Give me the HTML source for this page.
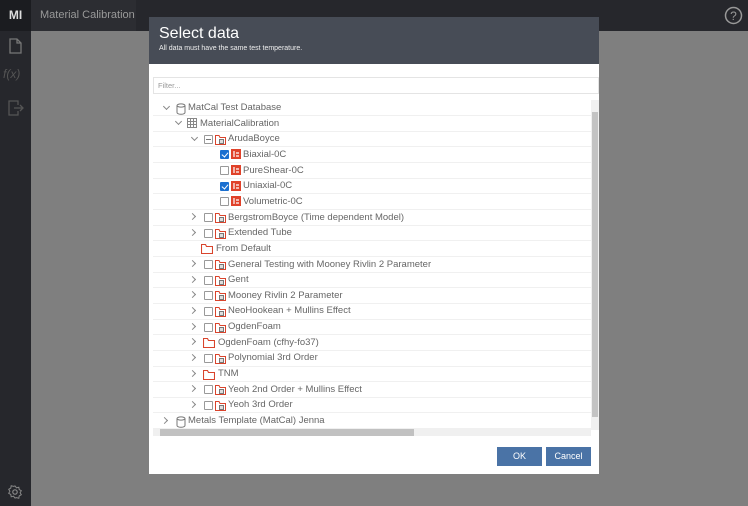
<!DOCTYPE html>
<html><head><meta charset="utf-8"><style>
*{margin:0;padding:0;box-sizing:border-box}
body{width:748px;height:506px;overflow:hidden;background:#7f7f7f;font-family:"Liberation Sans",sans-serif;position:relative}
.top{position:absolute;left:0;top:0;width:748px;height:31px;background:#26272c}
.side{position:absolute;left:0;top:0;width:31px;height:506px;background:#26272c}
.mi{position:absolute;left:0;top:0;width:31px;height:31px;background:#1b1c20;color:#ddd;font-weight:bold;font-size:12px;line-height:31px;text-align:center}
.title{position:absolute;left:31px;top:0;width:105px;height:31px;background:#2c2d32;color:#999;font-size:11px;line-height:31px;padding-left:9px}
.dlg{position:absolute;left:149px;top:17px;width:450px;height:457px;background:#fff}
.hd{height:47px;background:#474c56;color:#fff;padding:8px 0 0 10px}
.hd h1{font-size:16px;font-weight:normal;line-height:18px}
.hd p{font-size:7px;margin-top:2px;color:#eee}
.filter{position:absolute;left:4px;top:60px;width:446px;height:17px;border:1px solid #e4e4e4;font-size:7.5px;color:#999;line-height:15px;padding-left:4px}
.row{position:absolute;left:4px;width:438px;height:15.65px;border-bottom:1px solid #f0f0f0}
.t{position:absolute;font-size:9.5px;color:#666;top:1.5px;white-space:nowrap}
.ch{position:absolute;top:3px;width:5px;height:5px;border-right:1px solid #888;border-bottom:1px solid #888}
.cd{transform:rotate(45deg)}
.cr{transform:rotate(-45deg);top:4px}
.cb{position:absolute;top:3px;width:9px;height:9px;border:1px solid #999;border-radius:1px;background:#fff}
.cb.on{background:#1a6fd0;border-color:#1a6fd0}
.cb.on:after{content:"";position:absolute;left:2px;top:0px;width:3px;height:5px;border-right:1.5px solid #fff;border-bottom:1.5px solid #fff;transform:rotate(40deg)}
.ic{position:absolute;top:2px}
.vs{position:absolute;left:442px;top:83px;width:8px;height:330px;background:#f0f0f0}
.vt{position:absolute;left:443px;top:95px;width:6px;height:305px;background:#c3c3c3}
.hs{position:absolute;left:4px;top:412px;width:438px;height:7px;background:#f0f0f0}
.ht{position:absolute;left:11px;top:412px;width:254px;height:7px;background:#c1c1c1}
.btn{position:absolute;top:430px;height:19px;background:#4a73a6;color:#fff;font-size:9px;line-height:19px;text-align:center}
</style></head><body>
<div class="top"></div><div class="side"></div>
<div class="mi">MI</div><div class="title">Material Calibration</div>
<svg style="position:absolute;left:9px;top:38px" width="13" height="16"><path d="M1 1h7l4 4v10H1z M8 1v4h4" fill="none" stroke="#777" stroke-width="1.3"/></svg>
<div style="position:absolute;left:3px;top:67px;color:#555;font-size:12px;font-style:italic">f(x)</div>
<svg style="position:absolute;left:8px;top:100px" width="16" height="16"><path d="M10 5V1H1v14h9v-4 M6 8h9 M12 5l3 3-3 3" fill="none" stroke="#555" stroke-width="1.3"/></svg>
<svg style="position:absolute;left:8px;top:485px" width="14" height="14"><circle cx="7" cy="7" r="2.2" fill="none" stroke="#888" stroke-width="1.2"/><path d="M7 1l1.5 1.8 2.3-.6.4 2.3 2.1 1.2-1.2 2 1.2 2-2.1 1.2-.4 2.3-2.3-.6L7 13l-1.5-1.8-2.3.6-.4-2.3L.7 8.3l1.2-2-1.2-2 2.1-1.2.4-2.3 2.3.6z" fill="none" stroke="#888" stroke-width="1"/></svg>
<svg style="position:absolute;left:724px;top:6px" width="19" height="19"><circle cx="9.5" cy="9.5" r="8" fill="none" stroke="#999" stroke-width="1.5"/><text x="9.5" y="14" font-size="12" fill="#999" text-anchor="middle" font-family="Liberation Sans">?</text></svg>

<div class="dlg">
<div class="hd"><h1>Select data</h1><p>All data must have the same test temperature.</p></div>
<div class="filter">Filter...</div>
<svg width="0" height="0" style="position:absolute"><defs>
<g id="db"><path d="M1 2.5v7c0 1 2 1.8 4 1.8s4-.8 4-1.8v-7" fill="none" stroke="#777"/><ellipse cx="5" cy="2.5" rx="4" ry="1.6" fill="none" stroke="#777"/></g>
<g id="tb"><rect x=".5" y=".5" width="9" height="9" fill="none" stroke="#888"/><path d="M.5 3.5h9M.5 6.5h9M3.5 .5v9M6.5 .5v9" stroke="#888"/></g>
<g id="fr"><path d="M.5 2.5v8h10v-7H5L4 1.5H.5z" fill="none" stroke="#d9442c"/><rect x="4" y="5" width="5" height="5" fill="#777"/><rect x="5" y="6" width="3" height="3" fill="#ddd"/></g>
<g id="fo"><path d="M.5 2.5v8h11v-7H5.5L4.5 1.5H.5z" fill="none" stroke="#d9442c" stroke-width="1.1"/></g>
<g id="da"><rect x="0" y="0" width="10" height="10" fill="#e0422a"/><path d="M3 2v6M5 4h3M5 7h3" stroke="#fff" stroke-width="1.2"/></g>
</defs></svg>
<div class="row" style="top:83.5px"><div class="ch cd" style="left:11px"></div><svg class="ic" style="left:23px" width="11" height="12"><use href="#db"/></svg><div class="t" style="left:35px">MatCal Test Database</div></div>
<div class="row" style="top:99.15px"><div class="ch cd" style="left:23px"></div><svg class="ic" style="left:34px" width="11" height="11"><use href="#tb"/></svg><div class="t" style="left:47px">MaterialCalibration</div></div>
<div class="row" style="top:114.8px"><div class="ch cd" style="left:39px"></div><div class="cb" style="left:51px"><div style="position:absolute;left:1px;top:3px;width:5px;height:1px;background:#777"></div></div><svg class="ic" style="left:62px" width="12" height="12"><use href="#fr"/></svg><div class="t" style="left:75px">ArudaBoyce</div></div>
<div class="row" style="top:130.45px"><div class="cb on" style="left:67px"></div><svg class="ic" style="left:78px" width="10" height="10"><use href="#da"/></svg><div class="t" style="left:90px">Biaxial-0C</div></div>
<div class="row" style="top:146.1px"><div class="cb" style="left:67px"></div><svg class="ic" style="left:78px" width="10" height="10"><use href="#da"/></svg><div class="t" style="left:90px">PureShear-0C</div></div>
<div class="row" style="top:161.75px"><div class="cb on" style="left:67px"></div><svg class="ic" style="left:78px" width="10" height="10"><use href="#da"/></svg><div class="t" style="left:90px">Uniaxial-0C</div></div>
<div class="row" style="top:177.4px"><div class="cb" style="left:67px"></div><svg class="ic" style="left:78px" width="10" height="10"><use href="#da"/></svg><div class="t" style="left:90px">Volumetric-0C</div></div>
<div class="row" style="top:193.05px"><div class="ch cr" style="left:37px"></div><div class="cb" style="left:51px"></div><svg class="ic" style="left:62px" width="12" height="12"><use href="#fr"/></svg><div class="t" style="left:75px">BergstromBoyce (Time dependent Model)</div></div>
<div class="row" style="top:208.7px"><div class="ch cr" style="left:37px"></div><div class="cb" style="left:51px"></div><svg class="ic" style="left:62px" width="12" height="12"><use href="#fr"/></svg><div class="t" style="left:75px">Extended Tube</div></div>
<div class="row" style="top:224.35px"><svg class="ic" style="left:48px" width="12" height="12"><use href="#fo"/></svg><div class="t" style="left:63px">From Default</div></div>
<div class="row" style="top:240px"><div class="ch cr" style="left:37px"></div><div class="cb" style="left:51px"></div><svg class="ic" style="left:62px" width="12" height="12"><use href="#fr"/></svg><div class="t" style="left:75px">General Testing with Mooney Rivlin 2 Parameter</div></div>
<div class="row" style="top:255.65px"><div class="ch cr" style="left:37px"></div><div class="cb" style="left:51px"></div><svg class="ic" style="left:62px" width="12" height="12"><use href="#fr"/></svg><div class="t" style="left:75px">Gent</div></div>
<div class="row" style="top:271.3px"><div class="ch cr" style="left:37px"></div><div class="cb" style="left:51px"></div><svg class="ic" style="left:62px" width="12" height="12"><use href="#fr"/></svg><div class="t" style="left:75px">Mooney Rivlin 2 Parameter</div></div>
<div class="row" style="top:286.95px"><div class="ch cr" style="left:37px"></div><div class="cb" style="left:51px"></div><svg class="ic" style="left:62px" width="12" height="12"><use href="#fr"/></svg><div class="t" style="left:75px">NeoHookean + Mullins Effect</div></div>
<div class="row" style="top:302.6px"><div class="ch cr" style="left:37px"></div><div class="cb" style="left:51px"></div><svg class="ic" style="left:62px" width="12" height="12"><use href="#fr"/></svg><div class="t" style="left:75px">OgdenFoam</div></div>
<div class="row" style="top:318.25px"><div class="ch cr" style="left:37px"></div><svg class="ic" style="left:50px" width="12" height="12"><use href="#fo"/></svg><div class="t" style="left:65px">OgdenFoam (cfhy-fo37)</div></div>
<div class="row" style="top:333.9px"><div class="ch cr" style="left:37px"></div><div class="cb" style="left:51px"></div><svg class="ic" style="left:62px" width="12" height="12"><use href="#fr"/></svg><div class="t" style="left:75px">Polynomial 3rd Order</div></div>
<div class="row" style="top:349.55px"><div class="ch cr" style="left:37px"></div><svg class="ic" style="left:50px" width="12" height="12"><use href="#fo"/></svg><div class="t" style="left:65px">TNM</div></div>
<div class="row" style="top:365.2px"><div class="ch cr" style="left:37px"></div><div class="cb" style="left:51px"></div><svg class="ic" style="left:62px" width="12" height="12"><use href="#fr"/></svg><div class="t" style="left:75px">Yeoh 2nd Order + Mullins Effect</div></div>
<div class="row" style="top:380.85px"><div class="ch cr" style="left:37px"></div><div class="cb" style="left:51px"></div><svg class="ic" style="left:62px" width="12" height="12"><use href="#fr"/></svg><div class="t" style="left:75px">Yeoh 3rd Order</div></div>
<div class="row" style="top:396.5px"><div class="ch cr" style="left:9px"></div><svg class="ic" style="left:23px" width="11" height="12"><use href="#db"/></svg><div class="t" style="left:35px">Metals Template (MatCal) Jenna</div></div>
<div class="vs"></div><div class="vt"></div>
<div class="hs"></div><div class="ht"></div>
<div class="btn" style="left:348px;width:45px">OK</div>
<div class="btn" style="left:397px;width:45px">Cancel</div>
</div>
</body></html>
